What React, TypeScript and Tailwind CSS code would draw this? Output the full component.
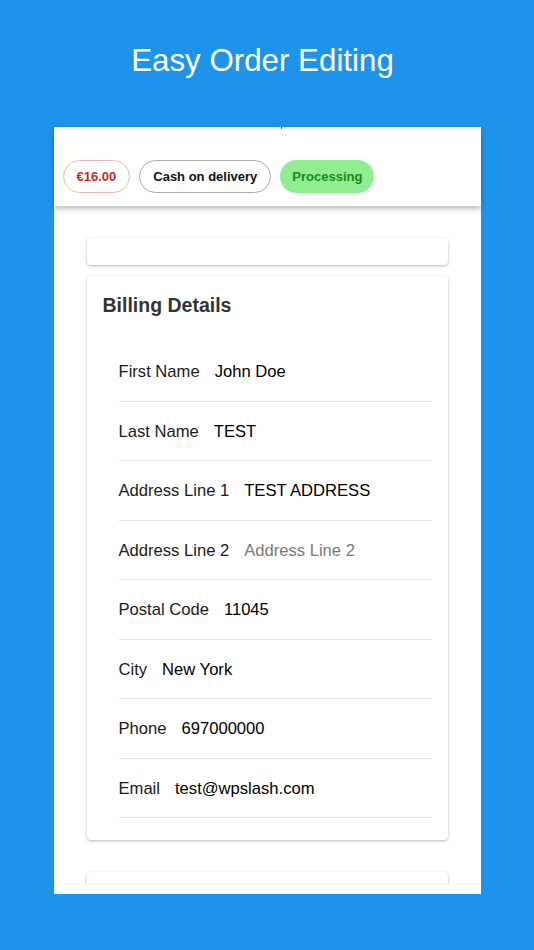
const rows = [
  { label: "First Name", value: "John Doe" },
  { label: "Last Name", value: "TEST" },
  { label: "Address Line 1", value: "TEST ADDRESS" },
  { label: "Address Line 2", value: "Address Line 2", placeholder: true },
  { label: "Postal Code", value: "11045" },
  { label: "City", value: "New York" },
  { label: "Phone", value: "697000000" },
  { label: "Email", value: "test@wpslash.com" },
];

const App = () => {
  return (
    <div className="min-h-[950px] bg-[#1e93ec] font-['Liberation_Sans',Arial,sans-serif]">
      <h1 className="h-[127px] pr-[9px] pt-[40px] text-center text-[31.3px] leading-[42px] text-white">
        Easy Order Editing
      </h1>

      <div className="mx-auto flex h-[767px] w-[427px] flex-col bg-white">
        <header className="relative z-10 flex h-[79px] flex-col bg-white shadow-[0_3px_5px_rgba(0,0,0,0.25)]">
          <div className="ml-[227px] h-[2px] w-[1px] bg-gray-600" />
          <div className="mt-[31px] flex items-center gap-[9px] pl-[9px]">
            <span className="flex h-[33px] items-center rounded-full border border-[#f3b6b6] px-[13px] pt-[1px] text-[13px] font-bold text-[#c62828]">
              €16.00
            </span>
            <span className="flex h-[33px] items-center rounded-full border border-[#aaaaaa] px-[13px] pt-[1px] text-[13px] font-bold text-[#111]">
              Cash on delivery
            </span>
            <span className="flex h-[33px] items-center rounded-full bg-[#90ee90] px-[12px] pt-[1px] text-[13px] font-bold text-[#178a17]">
              Processing
            </span>
          </div>
        </header>

        <main className="flex-1 overflow-hidden px-[33px] pt-[32px]">
          <section className="h-[27px] rounded-[4px] bg-white shadow-[0_1px_3px_rgba(0,0,0,0.3)]" />

          <section className="mt-[11px] rounded-[4px] bg-white pb-[22px] pl-[16px] pr-[16px] pt-[16px] shadow-[0_1px_3px_rgba(0,0,0,0.3)]">
            <h2 className="pt-[1px] text-[19.5px] font-bold leading-[25px] text-[#333]">
              Billing Details
            </h2>
            <div className="mt-[24px] pl-[16px]">
              {rows.map((row) => (
                <div
                  key={row.label}
                  className="flex h-[59.5px] items-center gap-[15px] border-b border-[#e3e3e3] pt-[3px] text-[16.6px]"
                >
                  <span className="text-[#1a1a1a]">{row.label}</span>
                  <span className={row.placeholder ? "text-[#7a7a7a]" : "text-black"}>
                    {row.value}
                  </span>
                </div>
              ))}
            </div>
          </section>

          <section className="mt-[32px] h-[40px] rounded-[4px] bg-white shadow-[0_1px_3px_rgba(0,0,0,0.3)]" />
        </main>

        <div className="relative z-10 h-[10px] bg-white" />
      </div>
    </div>
  );
};

export default App;
